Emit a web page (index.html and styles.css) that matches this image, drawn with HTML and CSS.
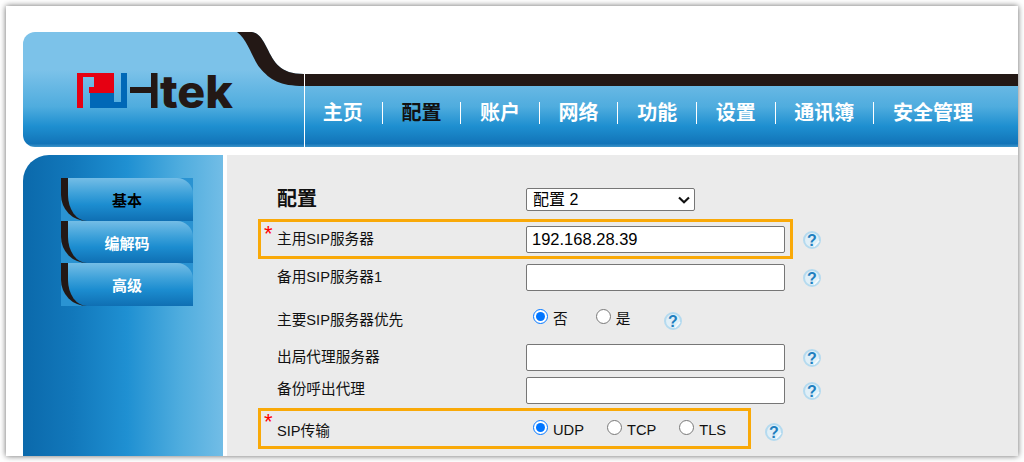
FILE: index.html
```html
<!DOCTYPE html>
<html lang="zh">
<head>
<meta charset="utf-8">
<title>Htek</title>
<link rel="stylesheet" href="styles.css">
</head>
<body>
<div class="shot">
  <header class="header">
    <div class="logo">
      <svg class="logo-art" width="180" height="50" viewBox="0 0 180 50">
        <g class="red">
          <rect x="0" y="0" width="6" height="35"/>
          <rect x="0" y="0" width="37" height="4"/>
          <rect x="17" y="4" width="20" height="10"/>
          <rect x="12" y="14" width="25" height="6"/>
        </g>
        <g class="blue">
          <rect x="13" y="20" width="24" height="9"/>
          <rect x="13" y="29" width="37" height="6"/>
          <rect x="44" y="0" width="6" height="35"/>
        </g>
        <g class="ink">
          <rect x="53" y="14" width="21" height="6"/>
          <rect x="74" y="0" width="6.500" height="35"/>
        </g>
        <text class="wordmark" x="83" y="35" textLength="73" lengthAdjust="spacingAndGlyphs">tek</text>
      </svg>
    </div>
    <div class="head-right">
      <div class="bar"></div>
      <nav class="nav">
        <a class="nav-item">主页</a>
        <a class="nav-item is-active">配置</a>
        <a class="nav-item">账户</a>
        <a class="nav-item">网络</a>
        <a class="nav-item">功能</a>
        <a class="nav-item">设置</a>
        <a class="nav-item">通讯簿</a>
        <a class="nav-item">安全管理</a>
      </nav>
    </div>
    <svg class="swoosh" width="70" height="54" viewBox="0 0 70 54">
      <path class="swoosh-white" d="M16 0C24 0 28 6 33 16C40 30 46 42 70 42V0Z"/>
      <path class="swoosh-ink" d="M3 0H16C24 0 28 6 33 16C40 30 46 42 70 42V54C46 54 36 48 26 36C18 26 14 8 3 0Z"/>
    </svg>
  </header>

  <div class="body">
    <aside class="side">
      <a class="tab is-active"><span>基本</span></a>
      <a class="tab tab-mid"><span>编解码</span></a>
      <a class="tab"><span>高级</span></a>
    </aside>
    <main class="main">
      <div class="row row-title">
        <h1 class="title">配置</h1>
        <div class="field">
          <div class="select-wrap">
            <select class="select"><option>配置 2</option></select>
            <svg class="chevron" width="12" height="8" viewBox="0 0 12 8"><path d="M1 1.500L6 6.200L11 1.500"/></svg>
          </div>
        </div>
      </div>

      <div class="row row-1 marked">
        <label class="label"><span class="star">*</span>主用SIP服务器</label>
        <div class="field">
          <input class="input" type="text" value="192.168.28.39">
          <svg class="help" width="18" height="18" viewBox="0 0 18 18"><circle class="help-ring" cx="9" cy="9" r="8"/><text class="help-mark" x="9" y="14.500">?</text><path class="help-tick" d="M11 15.500L16 10"/></svg>
        </div>
      </div>

      <div class="row row-2">
        <label class="label">备用SIP服务器1</label>
        <div class="field">
          <input class="input" type="text">
          <svg class="help" width="18" height="18" viewBox="0 0 18 18"><circle class="help-ring" cx="9" cy="9" r="8"/><text class="help-mark" x="9" y="14.500">?</text><path class="help-tick" d="M11 15.500L16 10"/></svg>
        </div>
      </div>

      <div class="row row-3">
        <label class="label label-low">主要SIP服务器优先</label>
        <div class="field field-radio">
          <label class="choice gap-28"><input type="radio" name="prio" checked><span>否</span></label>
          <label class="choice"><input type="radio" name="prio"><span>是</span></label>
          <svg class="help help-34" width="18" height="18" viewBox="0 0 18 18"><circle class="help-ring" cx="9" cy="9" r="8"/><text class="help-mark" x="9" y="14.500">?</text><path class="help-tick" d="M11 15.500L16 10"/></svg>
        </div>
      </div>

      <div class="row row-4">
        <label class="label label-up">出局代理服务器</label>
        <div class="field">
          <input class="input" type="text">
          <svg class="help" width="18" height="18" viewBox="0 0 18 18"><circle class="help-ring" cx="9" cy="9" r="8"/><text class="help-mark" x="9" y="14.500">?</text><path class="help-tick" d="M11 15.500L16 10"/></svg>
        </div>
      </div>

      <div class="row row-5">
        <label class="label label-up2">备份呼出代理</label>
        <div class="field">
          <input class="input" type="text">
          <svg class="help" width="18" height="18" viewBox="0 0 18 18"><circle class="help-ring" cx="9" cy="9" r="8"/><text class="help-mark" x="9" y="14.500">?</text><path class="help-tick" d="M11 15.500L16 10"/></svg>
        </div>
      </div>

      <div class="row row-6 marked marked-short">
        <label class="label label-low"><span class="star">*</span>SIP传输</label>
        <div class="field field-radio">
          <label class="choice gap-23"><input type="radio" name="trans" checked><span>UDP</span></label>
          <label class="choice gap-23"><input type="radio" name="trans"><span>TCP</span></label>
          <label class="choice"><input type="radio" name="trans"><span>TLS</span></label>
          <svg class="help help-39" width="18" height="18" viewBox="0 0 18 18"><circle class="help-ring" cx="9" cy="9" r="8"/><text class="help-mark" x="9" y="14.500">?</text><path class="help-tick" d="M11 15.500L16 10"/></svg>
        </div>
      </div>
    </main>
  </div>
</div>
</body>
</html>
```

FILE: styles.css
```css
*, *::after { box-sizing: border-box; }

html, body {
  margin: 0;
  height: 462px;
  overflow: hidden;
  background: #fff;
}

body {
  font-family: "Liberation Sans", "Noto Sans CJK SC", sans-serif;
  color: #111;
  padding: 6px;
}

.shot {
  height: 450px;
  padding: 26px 0 0 17px;
  background: #fff;
  box-shadow: 0 0 6px rgba(0, 0, 0, 0.6);
  overflow: hidden;
}

/* Header */
.header {
  position: relative;
  display: flex;
  height: 115px;
  border-radius: 12px 0 0 12px;
  background: linear-gradient(180deg, #7cc2e9 0, #7cc2e9 33%, #4facde 65%, #1e8fd0 82%, #1274b8 97%, #3b93c9 100%);
}

.logo {
  flex: 0 0 281px;
  padding: 41px 0 0 54px;
}

.logo-art { display: block; }
.red { fill: #e60012; }
.blue { fill: #0068b7; }
.ink { fill: #231815; }

.wordmark {
  font-family: Inter, "Liberation Sans", sans-serif;
  font-size: 45px;
  font-weight: 800;
  fill: #231815;
}

.head-right {
  flex: 1;
  display: flex;
  flex-direction: column;
  border-left: 1px solid #fff;
}

.bar {
  height: 54px;
  background: linear-gradient(180deg, #fff 0, #fff 42px, #231815 42px, #231815 100%);
}

.nav {
  flex: 1;
  display: flex;
  align-items: center;
  padding: 0 0 8px 0;
  margin-left: -1px;
}

.nav-item {
  padding: 0 18.800px;
  height: 22px;
  line-height: 22px;
  font-size: 20px;
  font-weight: 700;
  color: #fff;
  border-right: 1px solid #fff;
}

.nav-item:last-child { border-right: 0; }
.nav-item.is-active { color: #111; }

.swoosh {
  position: absolute;
  left: 211px;
  top: 0;
}

.swoosh-white { fill: #fff; }
.swoosh-ink { fill: #231815; }

/* Body */
.body {
  display: flex;
  margin-top: 8px;
  height: 301px;
}

.side {
  flex: 0 0 200px;
  padding: 23px 0 0 38px;
  border-top-left-radius: 26px;
  background: linear-gradient(90deg, #0b69ab 0, #1278bb 25%, #1f90d2 52%, #4eacde 78%, #72bde6 100%);
}

.tab {
  display: flex;
  width: 132px;
  height: 43px;
  font-size: 15px;
  font-weight: 700;
  color: #fff;
  background: #2a93d2;
}

.tab-mid { height: 42px; }

.tab span {
  flex: 1;
  display: flex;
  align-items: center;
  justify-content: center;
  padding-right: 7px;
  border-left: 7px solid #231815;
  border-radius: 0 16px 0 26px;
  background: linear-gradient(180deg, #74bde6 0, #3fa2da 35%, #1c8dd0 62%, #0f6fb3 100%);
}

.tab.is-active { color: #000; }

.main {
  flex: 1;
  margin-left: 4px;
  padding-top: 33px;
  background: #ebebeb;
}

.row {
  position: relative;
  display: grid;
  grid-template-columns: 249px 1fr;
  align-items: center;
  padding-left: 50px;
}

.row-title { height: 23px; margin-bottom: 8px; }
.row-1 { height: 40px; }
.row-2 { height: 36px; }
.row-3 { height: 44px; }
.row-4 { height: 37px; }
.row-5 { height: 29px; margin-bottom: 3px; }
.row-6 { height: 41px; }

.marked::after {
  content: "";
  position: absolute;
  left: 31px;
  top: 0;
  bottom: 0;
  width: 535px;
  border: 3px solid #f9a908;
  pointer-events: none;
}

.marked-short::after { width: 493px; }

.title {
  margin: 0;
  font-size: 20px;
  font-weight: 700;
  line-height: 23px;
  color: #111;
}

.label {
  position: relative;
  font-size: 14.670px;
  line-height: 20px;
  color: #111;
}

.label-low { padding-top: 5px; }
.label-up { padding-bottom: 2px; }
.label-up2 { padding-bottom: 4px; }

.star {
  position: absolute;
  left: -13px;
  top: -6px;
  font-size: 22px;
  line-height: 22px;
  color: #f00;
}

.label-low .star { top: -5px; }

.field {
  display: flex;
  align-items: center;
}

.field-radio { padding-left: 7px; }

.select-wrap {
  position: relative;
  display: flex;
}

.select {
  appearance: none;
  width: 169px;
  height: 23px;
  padding: 0 0 0 6px;
  font: 16px "Liberation Sans", "Noto Sans CJK SC", sans-serif;
  color: #000;
  background: #fff;
  border: 1px solid #767676;
  border-radius: 2px;
}

.chevron {
  position: absolute;
  right: 5px;
  top: 8px;
  pointer-events: none;
}

.chevron path {
  fill: none;
  stroke: #111;
  stroke-width: 2.200;
}

.input {
  width: 259px;
  height: 27px;
  padding: 0 5px;
  font: 16.500px "Liberation Sans", sans-serif;
  color: #000;
  background: #fff;
  border: 1px solid #767676;
  border-radius: 2px;
}

.help {
  flex: none;
  margin-left: 18px;
  margin-top: 1px;
}

.help-34 { margin-left: 34px; margin-top: 7px; }
.help-39 { margin-left: 39px; margin-top: 7px; }

.help-ring {
  fill: #e0eff7;
  stroke: #b4daef;
  stroke-width: 2;
}

.help-mark {
  font-family: "Liberation Sans", sans-serif;
  font-size: 16px;
  font-weight: 700;
  text-anchor: middle;
  fill: #1f7fbf;
}

.help-tick {
  fill: none;
  stroke: #f4f9fc;
  stroke-width: 1.500;
}

.choice {
  display: flex;
  align-items: center;
  gap: 5px;
  font-size: 14.670px;
  line-height: 20px;
  color: #111;
}

.choice input {
  width: 15px;
  height: 15px;
  margin: 0;
  position: relative;
  top: -1px;
}

.choice span { position: relative; top: 2px; }
.row-6 .choice span { top: 1px; }

.gap-28 { margin-right: 28px; }
.gap-23 { margin-right: 23px; }
```
